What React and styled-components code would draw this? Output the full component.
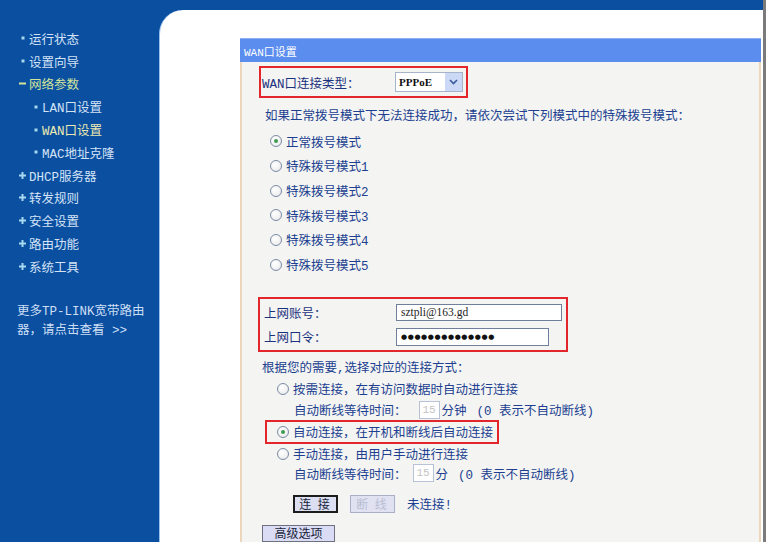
import React from "react";
import styled, { createGlobalStyle } from "styled-components";

const Global = createGlobalStyle`
  html, body { margin: 0; padding: 0; background: #0b4fa1; }
  body {
    width: 766px; height: 542px; overflow: hidden;
    font-family: "Liberation Mono", "Noto Sans CJK SC", monospace;
  }
`;

const Page = styled.div`
  display: flex;
  width: 766px;
  height: 542px;
  background: #0b4fa1;
  overflow: hidden;
`;

const Sidebar = styled.nav`
  width: 159px;
  flex: none;
  display: flex;
  flex-direction: column;
  padding-top: 27px;
  box-sizing: border-box;
`;

const NavItem = styled.div`
  display: flex;
  align-items: center;
  height: 22.8px;
  padding-left: ${(p) => (p.$sub ? 29 : 16)}px;
  color: ${(p) => p.$color || "#d4e3f6"};
  font-size: 12.5px;
  white-space: nowrap;
`;

const BulletSlot = styled.span`
  width: 13px;
  flex: none;
  display: flex;
  align-items: center;
  justify-content: center;
`;

const MoreLink = styled.div`
  margin-top: 25px;
  padding-left: 17px;
  line-height: 19px;
  font-size: 12.5px;
  color: #cddff5;
`;

const Main = styled.div`
  flex: 1;
  display: flex;
  flex-direction: column;
  padding-top: 10px;
  min-width: 0;
`;

const Content = styled.div`
  flex: 1;
  display: flex;
  flex-direction: column;
  background: #ffffff;
  border-top-left-radius: 24px;
  border-left: 1px solid #9cc0ee;
  padding: 28px 2px 0 80px;
`;

const RightEdge = styled.div`
  width: 3px;
  flex: none;
  background: #7b7b7b;
`;

const Panel = styled.section`
  flex: 1;
  display: flex;
  flex-direction: column;
`;

const PanelHeader = styled.div`
  height: 24px;
  box-sizing: border-box;
  background: #5b8def;
  border-top: 1px solid #8db0f5;
  color: #ffffff;
  font-size: 11px;
  padding-left: 4px;
  display: flex;
  align-items: center;
`;

const PanelBody = styled.div`
  flex: 1;
  background: #f4f4f2;
  border-left: 2px solid #ecd7bd;
  border-right: 2px solid #ecd7bd;
  display: flex;
  flex-direction: column;
  align-items: flex-start;
  color: #213f90;
  font-size: 12.5px;
`;

const TypeBox = styled.div`
  margin: 4px 0 0 17px;
  width: 209px;
  height: 32px;
  box-sizing: border-box;
  border: 2px solid #e2262b;
  display: flex;
  align-items: center;
  padding-left: 1px;
`;

const BoxLabel = styled.span`
  width: ${(p) => p.$w}px;
  flex: none;
  color: #1b327f;
  font-size: 12.5px;
`;

const Select = styled.div`
  width: 68px;
  height: 20px;
  box-sizing: border-box;
  border: 1px solid #a5b3cc;
  background: #ffffff;
  display: flex;
`;

const SelectText = styled.span`
  flex: 1;
  padding-left: 3px;
  font-family: "Liberation Serif", serif;
  font-weight: bold;
  font-size: 11px;
  line-height: 18px;
  color: #111;
`;

const SelectArrow = styled.span`
  width: 17px;
  background: #cbd9f6;
  display: flex;
  align-items: center;
  justify-content: center;
`;

const Hint = styled.div`
  margin: 10px 0 0 23px;
  line-height: 18px;
  white-space: nowrap;
`;

const RadioList = styled.div`
  margin: 3px 0 0 28px;
  display: flex;
  flex-direction: column;
`;

const RadioRow = styled.label`
  height: ${(p) => p.$h || 24.66}px;
  display: flex;
  align-items: center;
  gap: 4px;
  white-space: nowrap;
  margin-left: ${(p) => p.$ml || 0}px;
`;

const Radio = styled.span`
  width: 12px;
  height: 12px;
  flex: none;
  box-sizing: border-box;
  border-radius: 50%;
  border: 1px solid #7d8ba6;
  background: radial-gradient(circle at 40% 35%, #ffffff 0%, #f1f1f1 60%, #d9dde4 100%);
  display: flex;
  align-items: center;
  justify-content: center;
  &::after {
    content: "";
    width: 4px;
    height: 4px;
    border-radius: 50%;
    background: ${(p) => (p.$checked ? "#3f9a52" : "transparent")};
  }
`;

const AccountBox = styled.div`
  margin: 20px 0 0 16px;
  width: 310px;
  height: 55px;
  box-sizing: border-box;
  border: 2px solid #e2262b;
  padding: 1px 0 0 4px;
  display: grid;
  grid-template-columns: 132px auto;
  grid-auto-rows: 24.5px;
  align-items: center;
`;

const Field = styled.div`
  width: ${(p) => p.$w}px;
  height: ${(p) => p.$h}px;
  box-sizing: border-box;
  border: 1px solid #6f7f9c;
  background: #ffffff;
  display: flex;
  align-items: center;
  padding-left: 4px;
  color: #222;
  font-family: "Liberation Serif", serif;
  font-size: 11.5px;
`;

const Dots = styled.span`
  font-family: "DejaVu Sans", sans-serif;
  font-size: 7px;
  letter-spacing: 0.6px;
  color: #111;
`;

const ModeIntro = styled.div`
  margin: 8px 0 0 20px;
  line-height: 18px;
  white-space: nowrap;
`;

const WaitRow = styled.div`
  margin-left: 52px;
  height: ${(p) => p.$h}px;
  display: flex;
  align-items: center;
  white-space: nowrap;
`;

const SmallInput = styled.span`
  width: 21px;
  height: 18px;
  box-sizing: border-box;
  margin: 0 2px 0 ${(p) => p.$gap}px;
  border: 1px solid #b7c2d6;
  background: #ffffff;
  color: #c4c4c4;
  font-size: 11px;
  display: flex;
  align-items: center;
  justify-content: center;
`;

const Note = styled.span`
  margin-left: 10px;
`;

const AutoBox = styled.div`
  margin-left: 23px;
  width: 234px;
  height: 24px;
  box-sizing: border-box;
  border: 2px solid #e2262b;
  padding-left: 10px;
  display: flex;
  align-items: center;
  gap: 4px;
  white-space: nowrap;
`;

const ButtonRow = styled.div`
  margin: 10px 0 0 51px;
  height: 22px;
  display: flex;
  align-items: center;
  gap: 12px;
`;

const Btn = styled.button`
  width: 45px;
  height: 18px;
  padding: 0;
  box-sizing: border-box;
  font-family: "Noto Sans CJK SC", sans-serif;
  font-size: 12px;
  line-height: 1;
  letter-spacing: 2px;
  background: ${(p) => (p.$disabled ? "#e0e2f2" : "#dcdff2")};
  color: ${(p) => (p.$disabled ? "#b9bdd2" : "#1a1f3a")};
  border: ${(p) => (p.$disabled ? "1px solid #a9b0c8" : "2px solid #1c1c1c")};
  white-space: pre;
`;

const Status = styled.span`
  color: #213f90;
`;

const AdvancedBtn = styled.button`
  margin: 10px 0 0 20px;
  width: 73px;
  height: 17px;
  padding: 0;
  box-sizing: border-box;
  background: #d9dcf4;
  border: 1px solid #6e7080;
  color: #1a1f3a;
  font-family: "Noto Sans CJK SC", sans-serif;
  font-size: 12px;
  line-height: 1;
`;

function Bullet({ kind }) {
  if (kind === "minus") {
    return (
      <BulletSlot>
        <svg width="7" height="3" viewBox="0 0 7 3"><rect x="0" y="0.5" width="7" height="2" fill="#d2e49a" /></svg>
      </BulletSlot>
    );
  }
  if (kind === "plus") {
    return (
      <BulletSlot>
        <svg width="7" height="7" viewBox="0 0 7 7">
          <rect x="2.5" y="0" width="2" height="7" fill="#a6d8ef" />
          <rect x="0" y="2.5" width="7" height="2" fill="#a6d8ef" />
        </svg>
      </BulletSlot>
    );
  }
  return (
    <BulletSlot>
      <svg width="4" height="4" viewBox="0 0 4 4"><rect x="0.5" y="0.5" width="3" height="3" fill="#a6d8ef" /></svg>
    </BulletSlot>
  );
}

const nav = [
  { label: "运行状态", kind: "dot" },
  { label: "设置向导", kind: "dot" },
  { label: "网络参数", kind: "minus", color: "#d2e49a" },
  { label: "LAN口设置", kind: "dot", sub: true },
  { label: "WAN口设置", kind: "dot", sub: true, color: "#eceab0" },
  { label: "MAC地址克隆", kind: "dot", sub: true },
  { label: "DHCP服务器", kind: "plus" },
  { label: "转发规则", kind: "plus" },
  { label: "安全设置", kind: "plus" },
  { label: "路由功能", kind: "plus" },
  { label: "系统工具", kind: "plus" },
];

const modes = ["正常拨号模式", "特殊拨号模式1", "特殊拨号模式2", "特殊拨号模式3", "特殊拨号模式4", "特殊拨号模式5"];

export default function App() {
  return (
    <>
      <Global />
      <Page>
        <Sidebar>
          {nav.map((n) => (
            <NavItem key={n.label} $sub={n.sub} $color={n.color}>
              <Bullet kind={n.kind} />
              {n.label}
            </NavItem>
          ))}
          <MoreLink>
            更多TP-LINK宽带路由
            <br />
            器，请点击查看 &gt;&gt;
          </MoreLink>
        </Sidebar>
        <Main>
          <Content>
            <Panel>
              <PanelHeader>WAN口设置</PanelHeader>
              <PanelBody>
                <TypeBox>
                  <BoxLabel $w={133}>WAN口连接类型：</BoxLabel>
                  <Select>
                    <SelectText>PPPoE</SelectText>
                    <SelectArrow>
                      <svg width="9" height="6" viewBox="0 0 9 6">
                        <path d="M1 1 L4.5 4.5 L8 1" fill="none" stroke="#3a5a9a" strokeWidth="1.6" />
                      </svg>
                    </SelectArrow>
                  </Select>
                </TypeBox>
                <Hint>如果正常拨号模式下无法连接成功，请依次尝试下列模式中的特殊拨号模式：</Hint>
                <RadioList>
                  {modes.map((m, i) => (
                    <RadioRow key={m}>
                      <Radio $checked={i === 0} />
                      {m}
                    </RadioRow>
                  ))}
                </RadioList>
                <AccountBox>
                  <BoxLabel $w={132}>上网账号：</BoxLabel>
                  <Field $w={166} $h={17}>sztpli@163.gd</Field>
                  <BoxLabel $w={132}>上网口令：</BoxLabel>
                  <Field $w={153} $h={18}>
                    <Dots>●●●●●●●●●●●●●●</Dots>
                  </Field>
                </AccountBox>
                <ModeIntro>根据您的需要,选择对应的连接方式：</ModeIntro>
                <RadioRow $h={22} $ml={35}>
                  <Radio />
                  按需连接，在有访问数据时自动进行连接
                </RadioRow>
                <WaitRow $h={20}>
                  自动断线等待时间：
                  <SmallInput $gap={12}>15</SmallInput>
                  分钟
                  <Note>(0 表示不自动断线)</Note>
                </WaitRow>
                <AutoBox>
                  <Radio $checked />
                  自动连接，在开机和断线后自动连接
                </AutoBox>
                <RadioRow $h={20} $ml={35}>
                  <Radio />
                  手动连接，由用户手动进行连接
                </RadioRow>
                <WaitRow $h={19}>
                  自动断线等待时间：
                  <SmallInput $gap={6}>15</SmallInput>
                  分
                  <Note>(0 表示不自动断线)</Note>
                </WaitRow>
                <ButtonRow>
                  <Btn>{"连 接"}</Btn>
                  <Btn $disabled>{"断 线"}</Btn>
                  <Status>未连接!</Status>
                </ButtonRow>
                <AdvancedBtn>高级选项</AdvancedBtn>
              </PanelBody>
            </Panel>
          </Content>
        </Main>
        <RightEdge />
      </Page>
    </>
  );
}
